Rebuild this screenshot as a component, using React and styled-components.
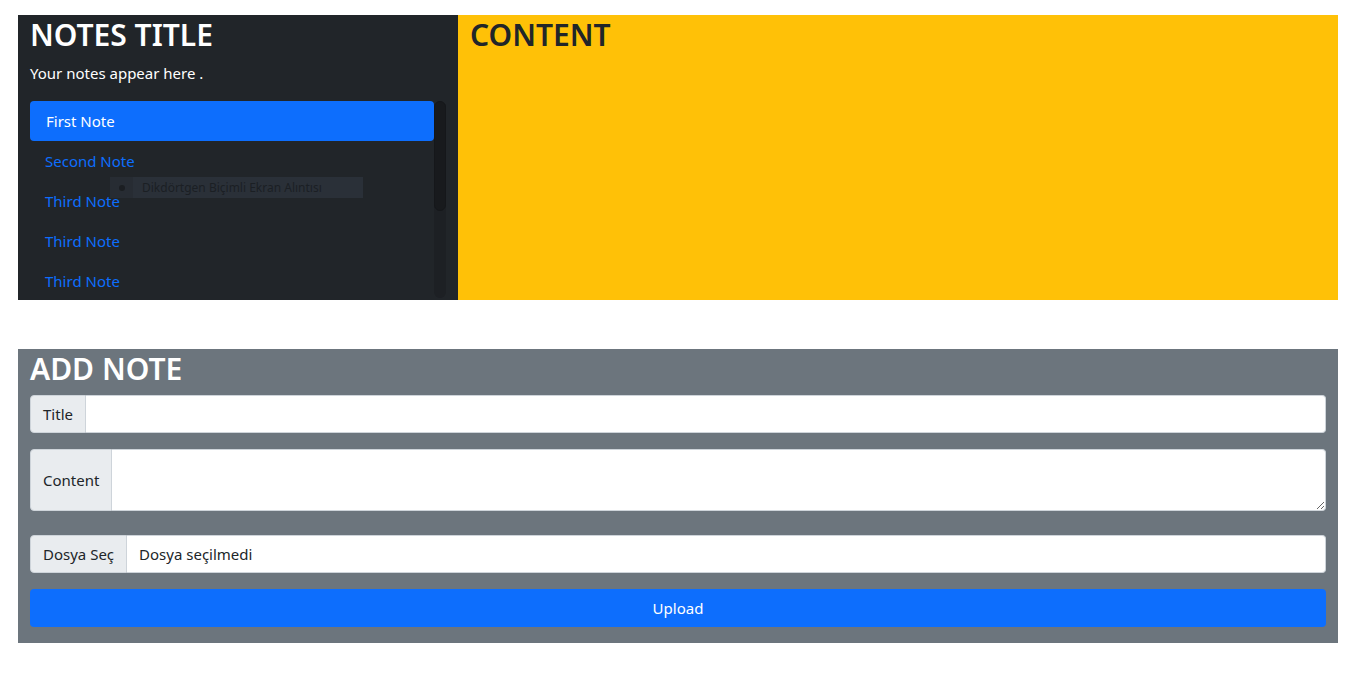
import React from "react";
import styled, { createGlobalStyle } from "styled-components";

const GlobalStyle = createGlobalStyle`
  body {
    margin: 0;
    background: #fff;
    font-family: "Noto Sans", "Open Sans", sans-serif;
    font-size: 16px;
    color: #212529;
  }
  * { box-sizing: border-box; }
`;

const Page = styled.div`
  width: 1320px;
  margin: 15px 0 0 18px;
`;

const TopRow = styled.div`
  display: grid;
  grid-template-columns: 440px 1fr;
  height: 285px;
`;

const Sidebar = styled.aside`
  position: relative;
  display: flex;
  flex-direction: column;
  background: #212529;
  color: #fff;
  padding: 0 12px;
  min-height: 0;
`;

const Heading = styled.h2`
  margin: 0 0 6px;
  font-size: 30px;
  line-height: 40px;
  font-weight: 600;
  color: ${(p) => p.color || "#fff"};
`;

const Lead = styled.p`
  margin: 0 0 16px;
  font-size: 15px;
  line-height: 24px;
`;

const ListArea = styled.div`
  flex: 1;
  min-height: 0;
  display: flex;
`;

const NoteList = styled.ul`
  list-style: none;
  margin: 0;
  padding: 0;
  flex: 1;
  overflow: hidden;
`;

const ScrollTrack = styled.div`
  width: 12px;
  height: 197px;
  border-radius: 6px;
  background: #1d2024;
`;

const ScrollThumb = styled.div`
  height: 110px;
  border-radius: 6px;
  background: #181a1d;
  border: 1px solid #15171a;
`;

const NoteItem = styled.li`
  height: 40px;
  display: flex;
  align-items: center;
  padding: 0 16px 0 ${(p) => (p.$active ? "16px" : "15px")};
  border-radius: 4px;
  font-size: 15px;
  background: ${(p) => (p.$active ? "#0d6efd" : "transparent")};
  color: ${(p) => (p.$active ? "#fff" : "#0d6efd")};
`;

const Tooltip = styled.div`
  position: absolute;
  left: 92px;
  top: 162px;
  width: 253px;
  height: 21px;
  display: flex;
  align-items: center;
  background: #2a3038;
  font-size: 12px;
  color: #1b1f24;
`;

const TooltipDot = styled.span`
  width: 23px;
  height: 100%;
  display: flex;
  align-items: center;
  justify-content: center;
  background: #272c33;
  margin-right: 9px;

  &::after {
    content: "";
    width: 6px;
    height: 6px;
    border-radius: 50%;
    background: #1b1e22;
  }
`;

const ContentPanel = styled.section`
  background: #ffc107;
  padding: 0 12px;
`;

const AddPanel = styled.section`
  margin-top: 49px;
  background: #6c757d;
  padding: 0 12px 16px;
`;

const InputGroup = styled.div`
  display: flex;
  margin-bottom: ${(p) => p.$mb || "16px"};
  height: ${(p) => p.$h || "38px"};
`;

const Addon = styled.span`
  display: flex;
  align-items: center;
  padding: 0 12px;
  background: #e9ecef;
  border: 1px solid #ced4da;
  border-radius: 4px 0 0 4px;
  font-size: 15px;
  color: #212529;
  white-space: nowrap;
`;

const TextInput = styled.input`
  flex: 1;
  min-width: 0;
  border: 1px solid #ced4da;
  border-left: none;
  border-radius: 0 4px 4px 0;
  background: #fff;
  font: inherit;
  outline: none;
`;

const TextArea = styled.textarea`
  flex: 1;
  min-width: 0;
  border: 1px solid #ced4da;
  border-left: none;
  border-radius: 0 4px 4px 0;
  background: #fff;
  font: inherit;
  outline: none;
  resize: vertical;
`;

const FileName = styled.span`
  flex: 1;
  display: flex;
  align-items: center;
  padding: 0 12px;
  background: #fff;
  border: 1px solid #ced4da;
  border-left: none;
  border-radius: 0 4px 4px 0;
  font-size: 15px;
  color: #212529;
`;

const UploadButton = styled.button`
  display: block;
  width: 100%;
  height: 38px;
  border: none;
  border-radius: 4px;
  background: #0d6efd;
  color: #fff;
  font: inherit;
  font-size: 15px;
`;

const notes = ["First Note", "Second Note", "Third Note", "Third Note", "Third Note"];

export default function App() {
  return (
    <>
      <GlobalStyle />
      <Page>
        <TopRow>
          <Sidebar>
            <Heading>NOTES TITLE</Heading>
            <Lead>Your notes appear here .</Lead>
            <ListArea>
              <NoteList>
                {notes.map((n, i) => (
                  <NoteItem key={i} $active={i === 0}>
                    {n}
                  </NoteItem>
                ))}
              </NoteList>
              <ScrollTrack>
                <ScrollThumb />
              </ScrollTrack>
            </ListArea>
            <Tooltip>
              <TooltipDot />
              Dikdörtgen Biçimli Ekran Alıntısı
            </Tooltip>
          </Sidebar>
          <ContentPanel>
            <Heading color="#212529">CONTENT</Heading>
          </ContentPanel>
        </TopRow>

        <AddPanel>
          <Heading>ADD NOTE</Heading>
          <InputGroup>
            <Addon>Title</Addon>
            <TextInput type="text" />
          </InputGroup>
          <InputGroup $h="62px" $mb="24px">
            <Addon>Content</Addon>
            <TextArea />
          </InputGroup>
          <InputGroup>
            <Addon>Dosya Seç</Addon>
            <FileName>Dosya seçilmedi</FileName>
          </InputGroup>
          <UploadButton>Upload</UploadButton>
        </AddPanel>
      </Page>
    </>
  );
}
